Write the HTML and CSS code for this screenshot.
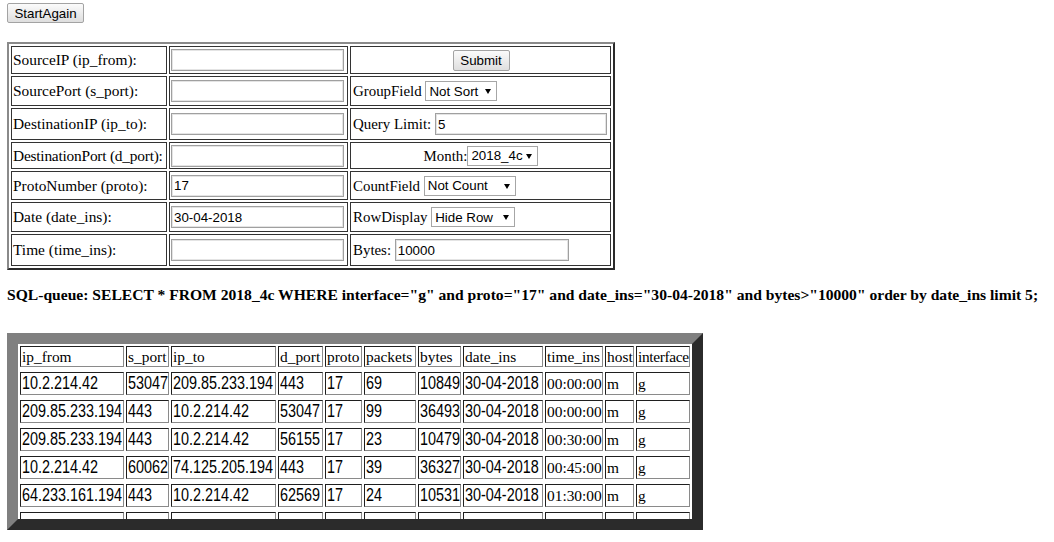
FILE: index.html
```html
<!DOCTYPE html>
<html>
<head>
<meta charset="utf-8">
<title>Query</title>
<link rel="stylesheet" href="styles.css">
</head>
<body>
<form class="topbar"><button type="button" class="btn start">StartAgain</button></form>
<table class="qform">
  <tr class="row-a">
    <td class="c1">SourceIP (ip_from):</td>
    <td class="c2"><input class="txt" type="text"></td>
    <td class="c3 center"><button type="button" class="btn submit">Submit</button></td>
  </tr>
  <tr class="row-b">
    <td class="c1">SourcePort (s_port):</td>
    <td class="c2"><input class="txt" type="text"></td>
    <td class="c3">GroupField <span class="sel sel-group"><select><option>Not Sort</option></select></span></td>
  </tr>
  <tr class="row-c">
    <td class="c1">DestinationIP (ip_to):</td>
    <td class="c2"><input class="txt" type="text"></td>
    <td class="c3">Query Limit: <input class="txt txt-limit" type="text" value="5"></td>
  </tr>
  <tr class="row-d">
    <td class="c1 tight">DestinationPort (d_port):</td>
    <td class="c2"><input class="txt" type="text"></td>
    <td class="c3 center">Month:<span class="sel sel-month"><select><option>2018_4c</option></select></span></td>
  </tr>
  <tr class="row-e">
    <td class="c1">ProtoNumber (proto):</td>
    <td class="c2"><input class="txt" type="text" value="17"></td>
    <td class="c3">CountField <span class="sel sel-count"><select><option>Not Count</option></select></span></td>
  </tr>
  <tr class="row-f">
    <td class="c1">Date (date_ins):</td>
    <td class="c2"><input class="txt" type="text" value="30-04-2018"></td>
    <td class="c3">RowDisplay <span class="sel sel-row"><select><option>Hide Row</option></select></span></td>
  </tr>
  <tr class="row-g">
    <td class="c1">Time (time_ins):</td>
    <td class="c2"><input class="txt" type="text"></td>
    <td class="c3">Bytes: <input class="txt txt-bytes" type="text" value="10000"></td>
  </tr>
</table>

<p class="sql">SQL-queue: SELECT * FROM 2018_4c WHERE interface="g" and proto="17" and date_ins="30-04-2018" and bytes&gt;"10000" order by date_ins limit 5;</p>

<div class="frame">
<table class="res">
  <tr>
    <th class="w-ipf">ip_from</th>
    <th class="w-sp">s_port</th>
    <th class="w-ipt">ip_to</th>
    <th class="w-dp">d_port</th>
    <th class="w-pr">proto</th>
    <th class="w-pk">packets</th>
    <th class="w-by">bytes</th>
    <th class="w-di">date_ins</th>
    <th class="w-ti">time_ins</th>
    <th class="w-ho">host</th>
    <th class="w-if">interface</th>
  </tr>
  <tr>
    <td><span class="n">10.2.214.42</span></td><td><span class="n">53047</span></td><td><span class="n">209.85.233.194</span></td><td><span class="n">443</span></td><td><span class="n">17</span></td><td><span class="n">69</span></td><td><span class="n">10849</span></td><td><span class="n">30-04-2018</span></td><td>00:00:00</td><td>m</td><td>g</td>
  </tr>
  <tr>
    <td><span class="n">209.85.233.194</span></td><td><span class="n">443</span></td><td><span class="n">10.2.214.42</span></td><td><span class="n">53047</span></td><td><span class="n">17</span></td><td><span class="n">99</span></td><td><span class="n">36493</span></td><td><span class="n">30-04-2018</span></td><td>00:00:00</td><td>m</td><td>g</td>
  </tr>
  <tr>
    <td><span class="n">209.85.233.194</span></td><td><span class="n">443</span></td><td><span class="n">10.2.214.42</span></td><td><span class="n">56155</span></td><td><span class="n">17</span></td><td><span class="n">23</span></td><td><span class="n">10479</span></td><td><span class="n">30-04-2018</span></td><td>00:30:00</td><td>m</td><td>g</td>
  </tr>
  <tr>
    <td><span class="n">10.2.214.42</span></td><td><span class="n">60062</span></td><td><span class="n">74.125.205.194</span></td><td><span class="n">443</span></td><td><span class="n">17</span></td><td><span class="n">39</span></td><td><span class="n">36327</span></td><td><span class="n">30-04-2018</span></td><td>00:45:00</td><td>m</td><td>g</td>
  </tr>
  <tr>
    <td><span class="n">64.233.161.194</span></td><td><span class="n">443</span></td><td><span class="n">10.2.214.42</span></td><td><span class="n">62569</span></td><td><span class="n">17</span></td><td><span class="n">24</span></td><td><span class="n">10531</span></td><td><span class="n">30-04-2018</span></td><td>01:30:00</td><td>m</td><td>g</td>
  </tr>
  <tr>
    <td>&nbsp;</td><td>&nbsp;</td><td>&nbsp;</td><td>&nbsp;</td><td>&nbsp;</td><td>&nbsp;</td><td>&nbsp;</td><td>&nbsp;</td><td>&nbsp;</td><td>&nbsp;</td><td>&nbsp;</td>
  </tr>
</table>
</div>
</body>
</html>
```

FILE: styles.css
```css
html, body {
  background: #ffffff;
}
body {
  margin: 3px 7px;
  font-family: "Liberation Serif", "Times New Roman", serif;
  font-size: 15.4px;
  color: #000;
}

.topbar {
  margin: 0 0 19px 0;
  height: 20px;
}

.btn {
  font-family: "Liberation Sans", Arial, sans-serif;
  font-size: 13.33px;
  color: #000;
  background: linear-gradient(#fbfbfb, #dedede);
  border: 1px solid #a3a3a3;
  border-radius: 2px;
  padding: 0;
  margin: 0;
  height: 20px;
  line-height: 17px;
}
.start {
  width: 77px;
}
.submit {
  width: 57px;
  height: 21px;
  vertical-align: middle;
}

/* query form table */
.qform {
  border-collapse: separate;
  border-spacing: 2px;
  border: 2px solid;
  border-color: #8a8a8a #2b2b2b #2b2b2b #8a8a8a;
}
.qform td {
  box-sizing: border-box;
  border: 1px solid #333;
  padding: 1px;
  vertical-align: middle;
  white-space: nowrap;
}
.qform .c1 { width: 156px; }
.qform .c2 { width: 179px; }
.qform .c3 { width: 261px; padding-left: 2px; font-size: 14.9px; }
.qform .center { text-align: center; }
.qform .tight { letter-spacing: -0.22px; }

.row-a td { height: 28px; }
.row-b td { height: 30px; }
.row-c td { height: 32px; }
.row-d td { height: 27px; }
.row-e td { height: 29px; }
.row-f td { height: 30px; }
.row-g td { height: 32px; }

.txt {
  box-sizing: border-box;
  width: 173px;
  height: 22px;
  margin: 0;
  padding: 1px 2px;
  border: 1px solid #a0a0a0;
  box-shadow: inset 0 0 0 1px #e4e4e4;
  font-family: "Liberation Sans", Arial, sans-serif;
  font-size: 13.33px;
  color: #000;
  background: #fff;
  vertical-align: baseline;
  outline: none;
}
.c2 .txt { vertical-align: middle; }
.txt-limit { width: 172px; }
.txt-bytes { width: 174px; }

.sel {
  display: inline-block;
  position: relative;
  vertical-align: baseline;
  line-height: 0;
}
.sel select {
  -webkit-appearance: none;
  appearance: none;
  box-sizing: border-box;
  display: inline-block;
  vertical-align: baseline;
  height: 20px;
  margin: 0;
  padding: 0 14px 0 3px;
  border: 1px solid #a6a6a6;
  border-radius: 0;
  background: #fff;
  font-family: "Liberation Sans", Arial, sans-serif;
  font-size: 13.33px;
  line-height: normal;
  color: #000;
}
.sel::after {
  content: "";
  position: absolute;
  right: 6px;
  top: 8px;
  border-left: 3px solid transparent;
  border-right: 3px solid transparent;
  border-top: 5px solid #000;
  pointer-events: none;
}
.sel-group select { width: 72px; }
.sel-month select { width: 71px; }
.sel-count select { width: 92px; }
.sel-row select { width: 84px; }

/* sql line */
.sql {
  font-size: 15.6px;
  font-weight: bold;
  margin: 16px 0 29px 0;
  white-space: nowrap;
}

/* results */
.frame {
  width: 674px;
  height: 175px;
  overflow: hidden;
  background: #fff;
  border: 11px solid;
  border-color: #808080 #2b2b2b #2b2b2b #808080;
}
.res {
  table-layout: fixed;
  width: 674px;
  border-collapse: separate;
  border-spacing: 2px 5px;
  margin-top: -3px;
}
.res th,
.res td {
  box-sizing: border-box;
  border: 1px solid;
  border-color: #1f1f1f #8a8a8a #8a8a8a #1f1f1f;
  padding: 0 1px;
  text-align: left;
  font-weight: normal;
  white-space: nowrap;
  vertical-align: middle;
  font-family: "Liberation Serif", "Times New Roman", serif;
  font-size: 15.4px;
}
.res th { height: 21px; }
.res th.w-if { letter-spacing: -0.35px; }
.res td { height: 23px; }
.res .n {
  display: inline-block;
  font-family: "Liberation Sans", Arial, sans-serif;
  font-size: 18px;
  transform: scaleX(0.8);
  transform-origin: 0 50%;
}

.w-ipf { width: 104px; }
.w-sp { width: 43px; }
.w-ipt { width: 105px; }
.w-dp { width: 45px; }
.w-pr { width: 37px; }
.w-pk { width: 52px; }
.w-by { width: 43px; }
.w-di { width: 80px; }
.w-ti { width: 58px; }
.w-ho { width: 29px; }
.w-if { width: 54px; }
```
